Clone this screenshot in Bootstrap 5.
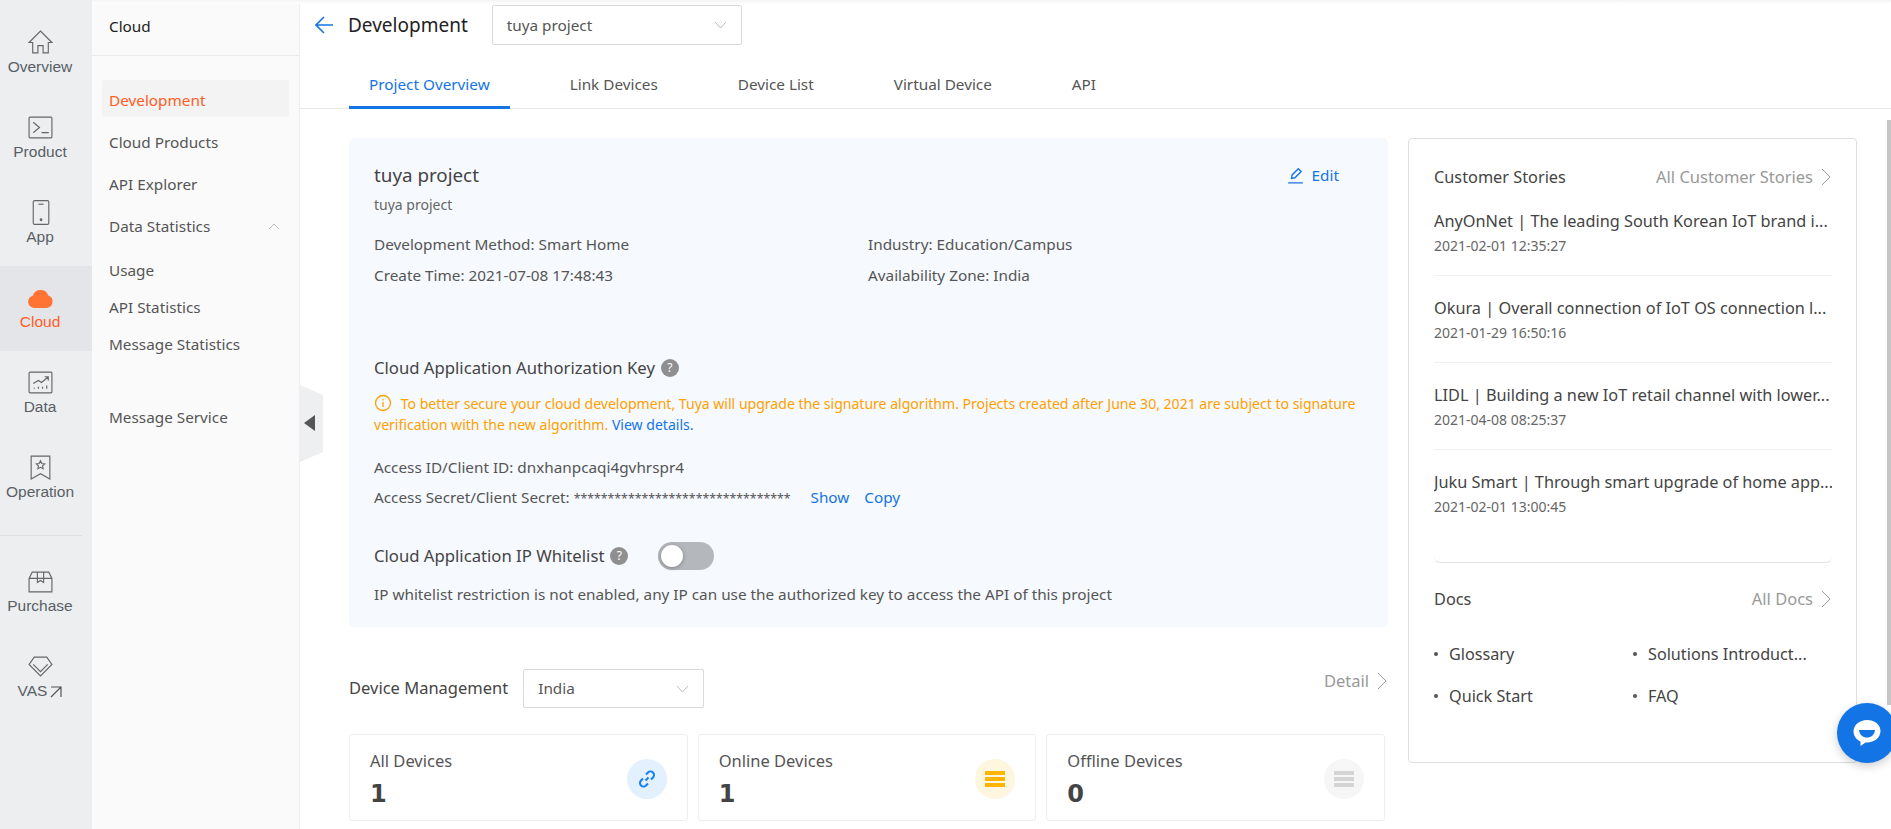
<!DOCTYPE html>
<html lang="en">
<head>
<meta charset="UTF-8">
<title>Development</title>
<link href="https://cdn.jsdelivr.net/npm/bootstrap@5.3.0/dist/css/bootstrap.min.css" rel="stylesheet">
<style>
html, body { height: 829px; overflow: hidden; }
body { font-family: "Noto Sans", "Liberation Sans", sans-serif; font-size: 15.3px; color: #555; background: #fff; }
a { text-decoration: none; color: #1574e6; }
.rail { width: 92px; height: 829px; background: #eceef0; padding-top: 11px; font-family: "Liberation Sans", Arial, sans-serif; font-size: 15.5px; color: #5a5f66; flex: none; }
.rail-item { height: 85px; padding: 18px 12px 0 0; text-align: center; line-height: 17px; white-space: nowrap; }
.rail-item > svg { display: block; margin: 0 auto 2px; width: 27px; height: 27px; }
.rail-item > svg.rail-out { display: inline; width: 12px; height: 12px; margin: 0 0 0 3px; }
.rail-item.is-active { background: #e4e5e9; color: #ff5c1f; }
.rail-sep { width: 82px; margin: 14px 0 0; border-top: 1px solid #dcdee0; height: 15px; }
.side { width: 208px; height: 829px; background: #fafafa; border-right: 1px solid #eceef0; flex: none; }
.side-head { height: 56px; border-bottom: 1px solid #eaeaea; padding: 15px 0 0 17px; color: #222; line-height: 22px; }
.side-menu { padding: 24px 10px 0; }
.side-link { height: 37px; line-height: 33px; padding: 4px 0 0 7px; color: #555; border-radius: 3px; margin-bottom: 5px; display: flex; justify-content: space-between; align-items: center; }
.side-link.is-current { background: #f3f3f3; color: #ff5c1f; }
.side-link.is-open { margin-bottom: 7px; }
.side-link.is-sub { margin-bottom: 0; }
.side-link.is-gap { margin-top: 36px; }
.side-link svg { margin-right: 9px; }
.main-area { position: relative; min-width: 0; }
.page-head { height: 64px; padding-left: 48px; color: #222; }
.back-arrow { margin: 16px 0 0 -33px; flex: none; }
.page-head h1 { font-size: 19px; font-weight: 400; margin: 0 24px 0 15px; line-height: 50px; color: #222; }
.pick { border: 1px solid #d9d9d9; border-radius: 2px; height: 40px; padding: 0 14px; color: #555; background: #fff; }
.pick.is-top { width: 250px; margin-top: 5px; }
.pick.is-zone { width: 181px; }
.tab-bar { height: 45px; padding-left: 49px; border-bottom: 1px solid #e8e8e8; gap: 40px; }
.tab-bar .nav-link { height: 45px; padding: 9px 20px 0; color: #555; line-height: 22px; text-align: center; }
.tab-bar .nav-link.active { color: #1574e6; border-bottom: 3px solid #1574e6; }
.content-wrap { padding: 29px 0 0 49px; gap: 20px; }
.left-col { width: 1039px; flex: none; }
.right-col { width: 449px; height: 625px; flex: none; border: 1px solid #dedede; border-radius: 4px; padding: 27px 24px 0 25px; }
.info-panel { background: #f6f9fe; border-radius: 5px; height: 489px; padding: 22px 25px 0; }
.info-title { font-size: 18.8px; line-height: 30px; color: #444; }
.info-sub { line-height: 20px; margin-top: 5px; color: #666; font-size: 14px; }
.info-line { line-height: 22px; }
.info-left { width: 494px; }
.mt-18 { margin-top: 18px; }
.mt-9 { margin-top: 9px; }
.auth-head { font-size: 16.7px; line-height: 24px; margin-top: 70px; color: #444; }
.hint { width: 18px; height: 18px; border-radius: 50%; background: #8f8f8f; color: #fff; font-size: 12px; line-height: 18px; text-align: center; display: inline-block; margin-left: 6px; vertical-align: 2px; }
.warn-text { color: #ffa000; line-height: 21px; margin-top: 13px; font-size: 14.05px; }
.warn-text svg { vertical-align: -3px; margin-right: 5px; }
.key-first { margin-top: 21px; }
.key-second { margin-top: 8px; }
.key-second a { margin-left: 15px; }
.key-second .first-act { margin-left: 20px; }
.key-stars { font-size: 12.3px; }
.white-row { margin-top: 32px; height: 28px; font-size: 16.7px; color: #444; }
.toggle-track { width: 56px; height: 28px; border-radius: 14px; background: #b4b7bc; margin-left: 30px; padding: 3px; }
.toggle-knob { width: 22px; height: 22px; border-radius: 50%; background: #fff; box-shadow: 0 1px 4px rgba(0,0,0,.3); }
.note-line { margin-top: 13px; line-height: 22px; }
.device-row { margin-top: 42px; height: 39px; }
.device-row .pick { height: 39px; margin-left: 15px; }
.device-label { font-size: 16.5px; color: #444; }
.more-link { color: #999; font-size: 16.5px; }
.more-link svg { margin-right: 1px; }
.device-row .more-link { margin-top: -15px; }
.stat-row { margin-top: 26px; gap: 10px; margin-right: 3px; }
.stat-box { flex: 1 1 0; height: 87px; border: 1px solid #eeeeee; border-radius: 3px; padding: 15px 20px; }
.stat-name { line-height: 22px; color: #555; font-size: 16.5px; }
.stat-num { font-size: 24px; font-weight: 700; color: #444; line-height: 30px; margin-top: 7px; font-family: "DejaVu Sans", sans-serif; }
.stat-dot { width: 40px; height: 40px; border-radius: 50%; flex: none; margin-top: 9px; }
.dot-blue { background: #e3f0fe; }
.dot-amber { background: #fff6e0; }
.dot-grey { background: #f6f6f6; }
.right-head { line-height: 22px; color: #444; font-size: 16.3px; }
.story-title { line-height: 22px; white-space: nowrap; overflow: hidden; color: #444; font-size: 16.3px; }
.story-date { line-height: 20px; margin-top: 4px; font-size: 14px; color: #666; }
.story-item { padding: 22px 0 19px; border-bottom: 1px solid #f0f0f0; }
.story-item + .story-item { padding-top: 21px; }
.story-item.is-last { border-bottom: 0; padding-bottom: 0; }
.docs-rule { height: 8px; border-bottom: 1px solid #e2e2e2; border-radius: 0 0 6px 6px; margin-top: 38px; }
.docs-head { margin-top: 25px; }
.docs-grid { margin-top: 33px; row-gap: 20px; }
.docs-grid > div { line-height: 22px; color: #444; padding-left: 15px; position: relative; font-size: 16.2px; }
.docs-grid > div::before { content: ""; position: absolute; left: 0; top: 9px; width: 4px; height: 4px; border-radius: 50%; background: #555; }
.docs-grid .col-a { width: 199px; }
.docs-grid .col-b { width: 198px; }
.fold-tab { position: absolute; left: 0; top: 385px; width: 23px; height: 77px; background: #eeeff1; clip-path: polygon(0 0, 100% 10px, 100% 67px, 0 100%); }
.fold-tab::after { content: ""; position: absolute; left: 4px; top: 30px; border: 8px solid transparent; border-right: 11px solid #555; border-left: 0; }
.chat-btn { position: fixed; left: 1837px; top: 703px; width: 60px; height: 60px; border-radius: 50%; background: #1274e5; box-shadow: 0 3px 10px rgba(0,0,0,.2); }
.scroll-thumb { position: fixed; right: 0; top: 120px; width: 4px; height: 585px; background: #c6c6c6; }
.top-fade { position: fixed; left: 92px; right: 0; top: 0; height: 4px; background: linear-gradient(#f4f4f4, #fff); }
</style>
</head>
<body>
<div class="d-flex">
  <nav class="rail">
    <div class="rail-item">
      <svg viewBox="0 0 26 26" fill="none" stroke="#666" stroke-width="1.100"><path d="M2 13 13 2l11 11h-3.500v10h-5v-7h-5v7h-5V13z"/></svg>
      Overview
    </div>
    <div class="rail-item">
      <svg viewBox="0 0 26 26" fill="none" stroke="#666" stroke-width="1.100"><rect x="2" y="3" width="22" height="20" rx="1"/><path d="m6 8 6 5-6 5M14 18h7"/></svg>
      Product
    </div>
    <div class="rail-item">
      <svg viewBox="0 0 26 26" fill="none" stroke="#666" stroke-width="1.100"><rect x="6" y="1.500" width="15" height="23" rx="1.500"/><path d="M11 5h5"/><circle cx="13.500" cy="20" r=".8" fill="#666"/></svg>
      App
    </div>
    <div class="rail-item is-active">
      <svg viewBox="0 0 26 26" fill="#ff7433"><path d="M7 23a6 6 0 0 1-1.500-11.800A8 8 0 0 1 20.500 11 6.200 6.200 0 0 1 19 23z"/></svg>
      Cloud
    </div>
    <div class="rail-item">
      <svg viewBox="0 0 26 26" fill="none" stroke="#666" stroke-width="1.100"><rect x="2" y="3" width="22" height="20" rx="1"/><path d="m6 14 5-3 3 2 6-5M17 7.500h3.500V11M7 19v-1M11 19v-2M15 19v-2M19 19v-3"/></svg>
      Data
    </div>
    <div class="rail-item">
      <svg viewBox="0 0 26 26" fill="none" stroke="#666" stroke-width="1.100"><path d="M4 2h18v22l-9-5-9 5z"/><path d="m13 6.500 1.300 2.600 2.700.4-2 1.900.5 2.700-2.500-1.300-2.500 1.300.5-2.700-2-1.900 2.700-.4z"/></svg>
      Operation
    </div>
    <div class="rail-sep"></div>
    <div class="rail-item">
      <svg viewBox="0 0 26 26" fill="none" stroke="#666" stroke-width="1.100"><path d="M2 10v13h22V10l-3-6H5zM2 10h22M10 4v10l3-2 3 2V4"/></svg>
      Purchase
    </div>
    <div class="rail-item">
      <svg viewBox="0 0 26 26" fill="none" stroke="#666" stroke-width="1.100"><path d="M7 4h12l5 7-11 11L2 11z"/><path d="m6 11 7 7 7-7"/></svg>
      VAS<svg class="rail-out" viewBox="0 0 12 12" fill="none" stroke="#555" stroke-width="1.200"><path d="M1 1h10v10M11 1 1 11"/></svg>
    </div>
  </nav>

  <aside class="side">
    <div class="side-head">Cloud</div>
    <div class="side-menu">
      <div class="side-link is-current">Development</div>
      <div class="side-link">Cloud Products</div>
      <div class="side-link">API Explorer</div>
      <div class="side-link is-open">Data Statistics
        <svg width="12" height="7" viewBox="0 0 12 7" fill="none" stroke="#bbb"><path d="m1 6 5-5 5 5"/></svg>
      </div>
      <div class="side-link is-sub">Usage</div>
      <div class="side-link is-sub">API Statistics</div>
      <div class="side-link is-sub">Message Statistics</div>
      <div class="side-link is-gap">Message Service</div>
    </div>
  </aside>

  <main class="main-area flex-grow-1">
    <div class="fold-tab"></div>
    <div class="page-head d-flex align-items-start">
      <svg class="back-arrow" width="18" height="18" viewBox="0 0 18 18" fill="none" stroke="#1574e6" stroke-width="1.600"><path d="M18 9H1M9 1 1 9l8 8"/></svg>
      <h1>Development</h1>
      <div class="pick is-top d-flex align-items-center justify-content-between">tuya project
        <svg width="13" height="8" viewBox="0 0 13 8" fill="none" stroke="#bbb"><path d="m1 1 5.500 6L12 1"/></svg>
      </div>
    </div>
    <ul class="nav tab-bar">
      <li class="nav-item"><a class="nav-link active" href="#">Project Overview</a></li>
      <li class="nav-item"><a class="nav-link" href="#">Link Devices</a></li>
      <li class="nav-item"><a class="nav-link" href="#">Device List</a></li>
      <li class="nav-item"><a class="nav-link" href="#">Virtual Device</a></li>
      <li class="nav-item"><a class="nav-link" href="#">API</a></li>
    </ul>
    <div class="content-wrap d-flex align-items-start">
      <div class="left-col">
        <section class="info-panel">
          <div class="d-flex justify-content-between">
            <div class="info-title">tuya project</div>
            <a href="#" class="d-flex align-items-center gap-2 info-line pe-4"><svg width="17" height="17" viewBox="0 0 15 15" fill="none" stroke="#1574e6" stroke-width="1.200"><path d="m4 10 .5-3L10 1.500 12.500 4 7 9.500zM1 14h13"/></svg>Edit</a>
          </div>
          <div class="info-sub">tuya project</div>
          <div class="row g-0 info-line mt-18"><div class="info-left">Development Method: Smart Home</div><div class="col">Industry: Education/Campus</div></div>
          <div class="row g-0 info-line mt-9"><div class="info-left">Create Time: 2021-07-08 17:48:43</div><div class="col">Availability Zone: India</div></div>
          <div class="auth-head">Cloud Application Authorization Key<span class="hint">?</span></div>
          <div class="warn-text">
            <svg width="18" height="18" viewBox="0 0 18 18" fill="none" stroke="#ffa000" stroke-width="1.300"><circle cx="9" cy="9" r="7.500"/><path d="M9 8v5M9 5v1.500"/></svg>
            To better secure your cloud development, Tuya will upgrade the signature algorithm. Projects created after June 30, 2021 are subject to signature verification with the new algorithm. <a href="#">View details.</a>
          </div>
          <div class="info-line key-first">Access ID/Client ID: dnxhanpcaqi4gvhrspr4</div>
          <div class="info-line key-second">Access Secret/Client Secret: <span class="key-stars">********************************</span><a class="first-act" href="#">Show</a><a href="#">Copy</a></div>
          <div class="white-row d-flex align-items-center">Cloud Application IP Whitelist<span class="hint">?</span>
            <div class="toggle-track"><div class="toggle-knob"></div></div>
          </div>
          <div class="note-line">IP whitelist restriction is not enabled, any IP can use the authorized key to access the API of this project</div>
        </section>

        <div class="device-row d-flex align-items-center">
          <span class="device-label">Device Management</span>
          <div class="pick is-zone d-flex align-items-center justify-content-between">India
            <svg width="13" height="8" viewBox="0 0 13 8" fill="none" stroke="#bbb"><path d="m1 1 5.500 6L12 1"/></svg>
          </div>
          <a href="#" class="more-link ms-auto d-flex align-items-center gap-2">Detail <svg width="10" height="18" viewBox="0 0 10 18" fill="none" stroke="#999"><path d="m1 1 8 8-8 8"/></svg></a>
        </div>

        <div class="stat-row d-flex">
          <div class="stat-box d-flex justify-content-between">
            <div><div class="stat-name">All Devices</div><div class="stat-num">1</div></div>
            <div class="stat-dot dot-blue d-flex align-items-center justify-content-center">
              <svg width="18" height="18" viewBox="0 0 18 18" fill="none" stroke="#1680f0" stroke-width="2"><path d="m7.500 10.500 3-3M8 4.500l2-2a3.500 3.500 0 0 1 5 5l-2 2M10 13.500l-2 2a3.500 3.500 0 0 1-5-5l2-2"/></svg>
            </div>
          </div>
          <div class="stat-box d-flex justify-content-between">
            <div><div class="stat-name">Online Devices</div><div class="stat-num">1</div></div>
            <div class="stat-dot dot-amber d-flex align-items-center justify-content-center">
              <svg width="20" height="16" viewBox="0 0 20 16" fill="#ffb400"><rect width="20" height="4"/><rect y="6" width="20" height="4"/><rect y="12" width="20" height="4"/></svg>
            </div>
          </div>
          <div class="stat-box d-flex justify-content-between">
            <div><div class="stat-name">Offline Devices</div><div class="stat-num">0</div></div>
            <div class="stat-dot dot-grey d-flex align-items-center justify-content-center">
              <svg width="20" height="16" viewBox="0 0 20 16" fill="#d4d4d4"><rect width="20" height="4"/><rect y="6" width="20" height="4"/><rect y="12" width="20" height="4"/></svg>
            </div>
          </div>
        </div>
      </div>

      <aside class="right-col">
        <div class="right-head d-flex justify-content-between">
          <span>Customer Stories</span>
          <a href="#" class="more-link d-flex align-items-center gap-2">All Customer Stories <svg width="10" height="18" viewBox="0 0 10 18" fill="none" stroke="#999"><path d="m1 1 8 8-8 8"/></svg></a>
        </div>
        <div class="story-item"><div class="story-title">AnyOnNet | The leading South Korean IoT brand i...</div><div class="story-date">2021-02-01 12:35:27</div></div>
        <div class="story-item"><div class="story-title">Okura | Overall connection of IoT OS connection l...</div><div class="story-date">2021-01-29 16:50:16</div></div>
        <div class="story-item"><div class="story-title">LIDL | Building a new IoT retail channel with lower...</div><div class="story-date">2021-04-08 08:25:37</div></div>
        <div class="story-item is-last"><div class="story-title">Juku Smart | Through smart upgrade of home app...</div><div class="story-date">2021-02-01 13:00:45</div></div>
        <div class="docs-rule"></div>
        <div class="right-head docs-head d-flex justify-content-between">
          <span>Docs</span>
          <a href="#" class="more-link d-flex align-items-center gap-2">All Docs <svg width="10" height="18" viewBox="0 0 10 18" fill="none" stroke="#999"><path d="m1 1 8 8-8 8"/></svg></a>
        </div>
        <div class="docs-grid d-flex flex-wrap">
          <div class="col-a">Glossary</div><div class="col-b">Solutions Introduct...</div>
          <div class="col-a">Quick Start</div><div class="col-b">FAQ</div>
        </div>
      </aside>
    </div>
  </main>
</div>
<div class="top-fade"></div>
<div class="scroll-thumb"></div>
<div class="chat-btn d-flex align-items-center justify-content-center">
  <svg width="28" height="28" viewBox="0 0 28 28"><path d="M14 1C6.500 1 .5 6 .5 12.500c0 4.500 3 8 7 10v4.500l5-3.500h1.500c7.500 0 13.500-5 13.500-11.500S21.500 1 14 1z" fill="#fff"/><path d="M6 11h16c-.5 5-4 7.500-8 7.500S6.500 16 6 11z" fill="#1274e5"/></svg>
</div>
</body>
</html>
